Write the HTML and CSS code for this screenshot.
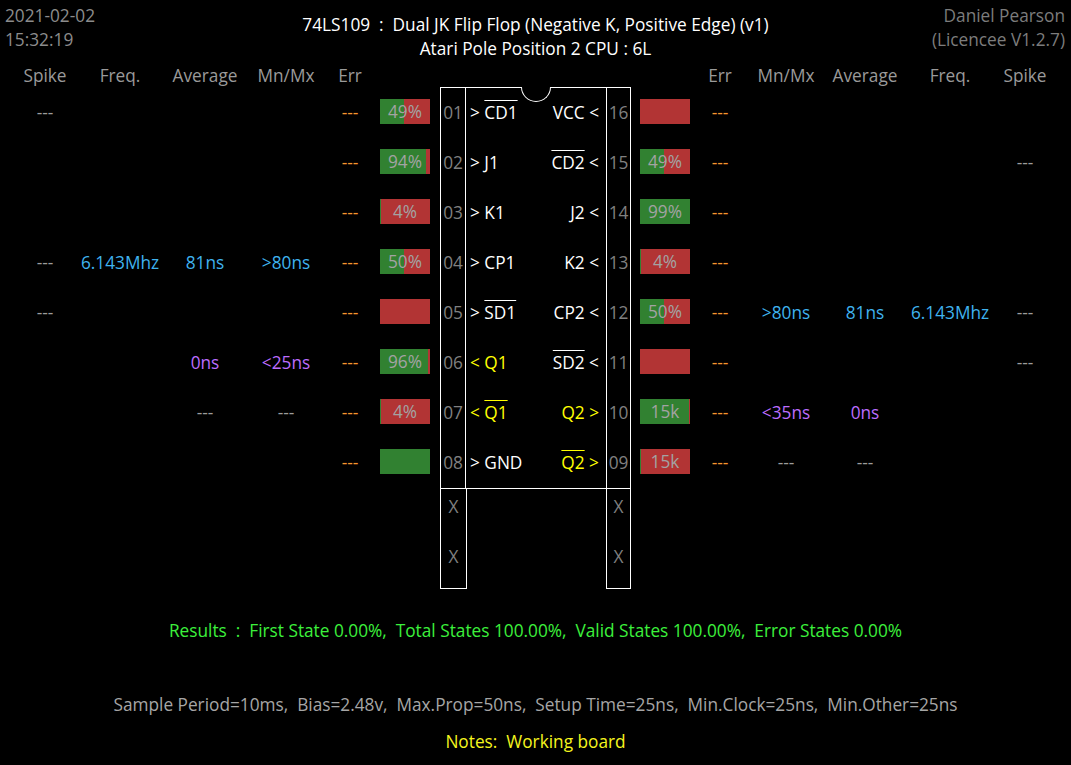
FILE: index.html
```html
<!DOCTYPE html>
<html lang="en">
<head>
    <meta charset="UTF-8">
    <title>74LS109 Test</title>
    <link rel="stylesheet" href="styles.css">
</head>
<body>
    <header class="top">
        <div class="stamp">2021-02-02<br>15:32:19</div>
        <div class="title">74LS109  :  Dual JK Flip Flop (Negative K, Positive Edge) (v1)<br>Atari Pole Position 2 CPU : 6L</div>
        <div class="owner">Daniel Pearson<br>(Licencee V1.2.7)</div>
    </header>

    <section class="board">
        <!-- left side: pins 01-08 -->
        <div class="side side-left">
            <div class="c head">Spike</div><div class="c head">Freq.</div><div class="c head">Average</div><div class="c head">Mn/Mx</div><div class="c head err">Err</div><div class="c"></div>

            <div class="c dim">---</div><div class="c"></div><div class="c"></div><div class="c"></div><div class="c err warn">---</div>
            <div class="c"><div class="bar"><div class="fill" style="width:48%"></div><span>49%</span></div></div>

            <div class="c"></div><div class="c"></div><div class="c"></div><div class="c"></div><div class="c err warn">---</div>
            <div class="c"><div class="bar"><div class="fill" style="width:92%"></div><span>94%</span></div></div>

            <div class="c"></div><div class="c"></div><div class="c"></div><div class="c"></div><div class="c err warn">---</div>
            <div class="c"><div class="bar"><div class="fill" style="width:2%"></div><span>4%</span></div></div>

            <div class="c dim">---</div><div class="c blue">6.143Mhz</div><div class="c blue">81ns</div><div class="c blue">&gt;80ns</div><div class="c err warn">---</div>
            <div class="c"><div class="bar"><div class="fill" style="width:48%"></div><span>50%</span></div></div>

            <div class="c dim">---</div><div class="c"></div><div class="c"></div><div class="c"></div><div class="c err warn">---</div>
            <div class="c"><div class="bar"><div class="fill" style="width:0%"></div></div></div>

            <div class="c"></div><div class="c"></div><div class="c purple">0ns</div><div class="c purple">&lt;25ns</div><div class="c err warn">---</div>
            <div class="c"><div class="bar"><div class="fill" style="width:96%"></div><span>96%</span></div></div>

            <div class="c"></div><div class="c"></div><div class="c dim">---</div><div class="c dim">---</div><div class="c err warn">---</div>
            <div class="c"><div class="bar"><div class="fill" style="width:2%"></div><span>4%</span></div></div>

            <div class="c"></div><div class="c"></div><div class="c"></div><div class="c"></div><div class="c err warn">---</div>
            <div class="c"><div class="bar"><div class="fill" style="width:100%"></div></div></div>
        </div>

        <!-- the chip itself -->
        <div class="chip">
            <div class="chip-body">
                <span class="notch"></span>
                <div class="num num-l">01</div><div class="pins"><span>&gt; <span class="ol">CD1</span></span><span>VCC &lt;</span></div><div class="num num-r">16</div>
                <div class="num num-l">02</div><div class="pins"><span>&gt; J1</span><span><span class="ol">CD2</span> &lt;</span></div><div class="num num-r">15</div>
                <div class="num num-l">03</div><div class="pins"><span>&gt; K1</span><span>J2 &lt;</span></div><div class="num num-r">14</div>
                <div class="num num-l">04</div><div class="pins"><span>&gt; CP1</span><span>K2 &lt;</span></div><div class="num num-r">13</div>
                <div class="num num-l">05</div><div class="pins"><span>&gt; <span class="ol">SD1</span></span><span>CP2 &lt;</span></div><div class="num num-r">12</div>
                <div class="num num-l">06</div><div class="pins"><span class="out">&lt; Q1</span><span><span class="ol">SD2</span> &lt;</span></div><div class="num num-r">11</div>
                <div class="num num-l">07</div><div class="pins"><span class="out">&lt; <span class="ol">Q1</span></span><span class="out">Q2 &gt;</span></div><div class="num num-r">10</div>
                <div class="num num-l">08</div><div class="pins"><span>&gt; GND</span><span class="out"><span class="ol">Q2</span> &gt;</span></div><div class="num num-r">09</div>
            </div>
            <div class="chip-legs">
                <div class="leg leg-l"><div class="x">X</div><div class="x">X</div></div>
                <div class="leg leg-r"><div class="x">X</div><div class="x">X</div></div>
            </div>
        </div>

        <!-- right side: pins 16-09 -->
        <div class="side side-right">
            <div class="c"></div><div class="c head">Err</div><div class="c head">Mn/Mx</div><div class="c head">Average</div><div class="c head">Freq.</div><div class="c head">Spike</div>

            <div class="c"><div class="bar"><div class="fill" style="width:0%"></div></div></div>
            <div class="c warn">---</div><div class="c"></div><div class="c"></div><div class="c"></div><div class="c"></div>

            <div class="c"><div class="bar"><div class="fill" style="width:48%"></div><span>49%</span></div></div>
            <div class="c warn">---</div><div class="c"></div><div class="c"></div><div class="c"></div><div class="c dim">---</div>

            <div class="c"><div class="bar"><div class="fill" style="width:99%"></div><span>99%</span></div></div>
            <div class="c warn">---</div><div class="c"></div><div class="c"></div><div class="c"></div><div class="c"></div>

            <div class="c"><div class="bar"><div class="fill" style="width:2%"></div><span>4%</span></div></div>
            <div class="c warn">---</div><div class="c"></div><div class="c"></div><div class="c"></div><div class="c"></div>

            <div class="c"><div class="bar"><div class="fill" style="width:48%"></div><span>50%</span></div></div>
            <div class="c warn">---</div><div class="c blue">&gt;80ns</div><div class="c blue">81ns</div><div class="c blue">6.143Mhz</div><div class="c dim">---</div>

            <div class="c"><div class="bar"><div class="fill" style="width:0%"></div></div></div>
            <div class="c warn">---</div><div class="c"></div><div class="c"></div><div class="c"></div><div class="c dim">---</div>

            <div class="c"><div class="bar"><div class="fill" style="width:98%"></div><span>15k</span></div></div>
            <div class="c warn">---</div><div class="c purple">&lt;35ns</div><div class="c purple">0ns</div><div class="c"></div><div class="c"></div>

            <div class="c"><div class="bar"><div class="fill" style="width:2%"></div><span>15k</span></div></div>
            <div class="c warn">---</div><div class="c dim">---</div><div class="c dim">---</div><div class="c"></div><div class="c"></div>
        </div>
    </section>

    <p class="results">Results  :  First State 0.00%,  Total States 100.00%,  Valid States 100.00%,  Error States 0.00%</p>
    <p class="settings">Sample Period=10ms,  Bias=2.48v,  Max.Prop=50ns,  Setup Time=25ns,  Min.Clock=25ns,  Min.Other=25ns</p>
    <p class="notes">Notes:  Working board</p>
</body>
</html>
```

FILE: styles.css
```css
body {
    margin: 0;
    background: #000;
    color: #fff;
    font-family: 'Open Sans', 'Noto Sans', sans-serif;
    font-size: 17.25px;
    line-height: 24px;
    width: 1071px;
    height: 765px;
    overflow: hidden;
}

.top {
    display: grid;
    grid-template-columns: 1fr auto 1fr;
    height: 64px;
}

.stamp {
    color: #8c8c8c;
    padding: 4px 0 0 5px;
}

.title {
    text-align: center;
    white-space: pre;
    padding-top: 13px;
}

.owner {
    color: #7c7c7c;
    text-align: right;
    padding: 4px 6px 0 0;
}

/* board = left table, chip, right table */
.board {
    display: flex;
    align-items: flex-start;
}

.side {
    display: grid;
    grid-template-rows: 24px repeat(8, 50px);
}

.side-left {
    grid-template-columns: 90px 60px 110px 52px 68px 50px;
}

.side-right {
    grid-template-columns: 50px 60px 72px 86px 84px 66px;
}

.c {
    display: flex;
    align-items: center;
    justify-content: center;
    white-space: nowrap;
}

.c.err {
    padding-left: 8px;
}

.head {
    color: #9a9a9a;
}

.dim {
    color: #9c9c9c;
}

.warn {
    color: #f5962e;
}

.blue {
    color: #3fb3ef;
}

.purple {
    color: #bb6dfd;
}

.bar {
    position: relative;
    width: 50px;
    height: 25px;
    margin-bottom: 3px;
    background: #b23434;
    display: flex;
    align-items: center;
    justify-content: center;
}

.bar .fill {
    position: absolute;
    left: 0;
    top: 0;
    bottom: 0;
    background: #318131;
}

.bar span {
    position: relative;
    color: #a3a3a3;
}

/* chip */
.chip {
    width: 191px;
    margin: 23px 9px 0 10px;
}

.chip-body {
    position: relative;
    border: 1px solid #fff;
    display: grid;
    grid-template-columns: 25px 1fr 24px;
    grid-template-rows: repeat(8, 50px);
}

.notch {
    position: absolute;
    top: -1px;
    left: 50%;
    width: 28px;
    height: 14px;
    margin-left: -15px;
    border: 1px solid #fff;
    border-top: none;
    border-radius: 0 0 15px 15px;
    background: #000;
}

.num {
    display: flex;
    align-items: center;
    justify-content: center;
    color: #808080;
}

.num-l {
    border-right: 1px solid #fff;
}

.num-r {
    border-left: 1px solid #fff;
}

.pins {
    display: flex;
    align-items: center;
    justify-content: space-between;
    padding: 0 7px 0 4px;
    white-space: nowrap;
}

.out {
    color: #ffff00;
}

.ol {
    text-decoration: overline;
}

.chip-legs {
    display: flex;
    justify-content: space-between;
}

.leg {
    height: 100px;
    border: 1px solid #fff;
    border-top: none;
    box-sizing: border-box;
}

.leg-l {
    width: 27px;
}

.leg-r {
    width: 25px;
}

.x {
    height: 50px;
    padding-top: 6px;
    box-sizing: border-box;
    text-align: center;
    color: #808080;
}

.results,
.settings,
.notes {
    margin: 0;
    text-align: center;
    white-space: pre;
}

.results {
    color: #3cf03c;
    margin-top: 30px;
}

.settings {
    color: #a6a6a6;
    margin-top: 50px;
}

.notes {
    color: #f5f51e;
    margin-top: 13px;
}
```
